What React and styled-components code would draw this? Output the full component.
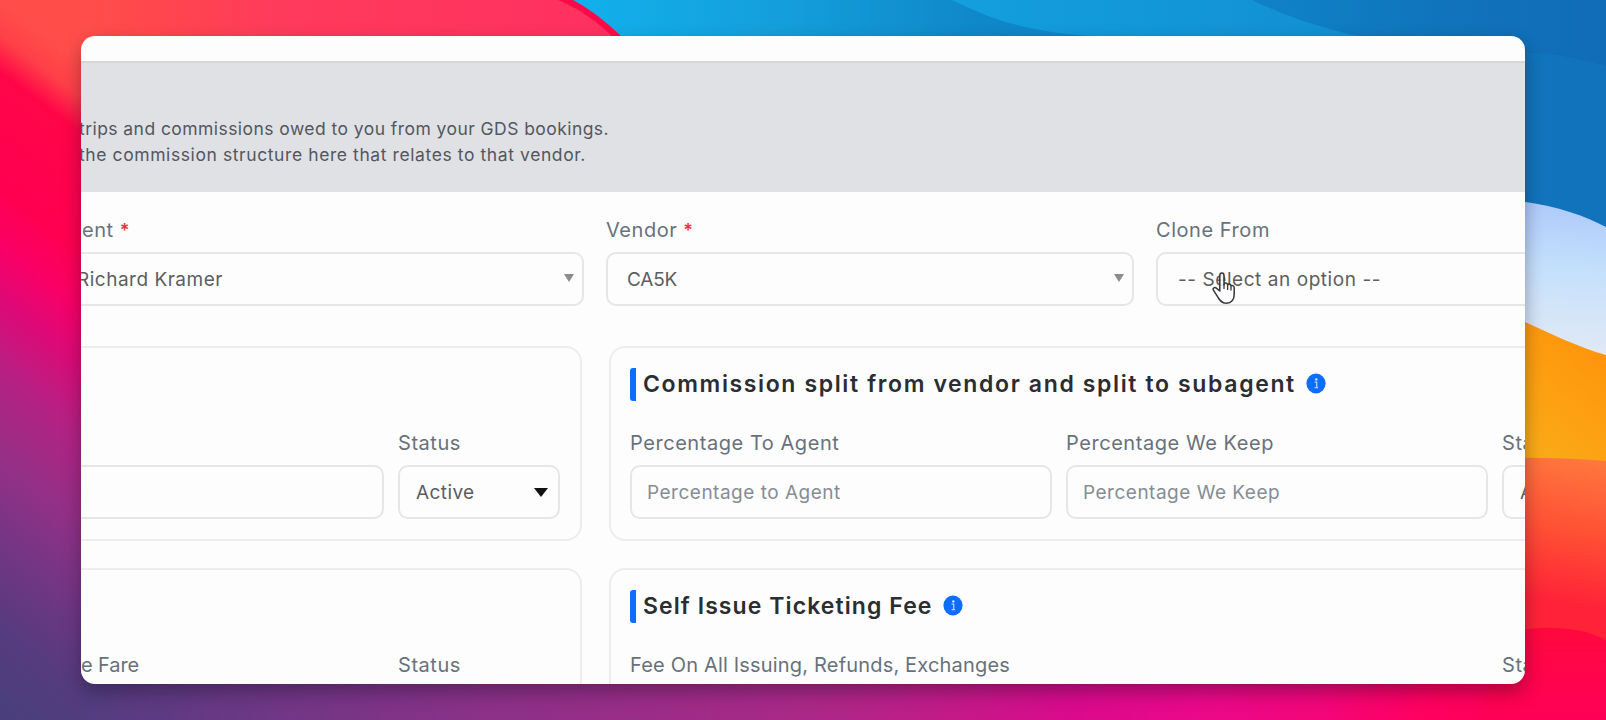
import styled, { createGlobalStyle } from 'styled-components';

const GlobalStyle = createGlobalStyle`
  * {
    box-sizing: border-box;
  }

  body {
    margin: 0;
    font-family: 'Inter', 'Open Sans', sans-serif;
    overflow: hidden;
  }
`;

const Desktop = styled.div`
  position: relative;
  width: 1606px;
  height: 720px;
  padding: 36px 81px;
  overflow: hidden;
`;

const WallpaperSvg = styled.svg`
  position: absolute;
  inset: 0;
`;

const Window = styled.main`
  position: relative;
  width: 1444px;
  height: 648px;
  overflow: hidden;
  background-color: #fdfdfd;
  border-radius: 14px;
`;

const WindowShadow = styled.div`
  position: relative;
  border-radius: 14px;
  box-shadow: 0 8px 18px rgba(20, 10, 30, 0.36);
`;

const Intro = styled.header`
  height: 131px;
  margin-top: 25px;
  padding-top: 53px;
  background-color: #e0e1e5;
  border-top: 2px solid #d6d8d8;
  color: #53575d;
  font-size: 17.5px;
`;

const IntroLine = styled.p`
  margin: 0 0 0 -2px;
  line-height: 26px;
  white-space: nowrap;
  letter-spacing: ${({ $tracking }) => $tracking}px;
`;

const FilterRow = styled.div`
  display: grid;
  grid-template-columns: 503px 528px 528px;
  column-gap: 22px;
  margin-top: 24px;
`;

const Field = styled.div`
  min-width: 0;
`;

const Label = styled.label`
  display: block;
  height: 28px;
  margin-bottom: 8px;
  padding-left: ${({ $indent }) => $indent || 0}px;
  color: #68717b;
  font-size: 20px;
  line-height: 28px;
  white-space: nowrap;
  letter-spacing: ${({ $tracking = 0.55 }) => $tracking}px;
`;

const Required = styled.span`
  margin-left: 6px;
  color: #e8323c;
  font-size: 18px;
  font-weight: 600;
  line-height: 1;
`;

const Control = styled.div`
  display: flex;
  align-items: center;
  justify-content: space-between;
  height: 54px;
  padding: 1px ${({ $right = 9 }) => $right}px 0 ${({ $left = 15 }) => $left}px;
  border: 2px solid #e6e6e8;
  border-radius: 10px;
  color: ${({ $placeholder }) => ($placeholder ? '#868d94' : '#5c5d60')};
  font-size: 19px;
  line-height: 28px;
  white-space: nowrap;
  letter-spacing: ${({ $tracking = 0.5 }) => $tracking}px;
  ${({ $cut }) => $cut && 'border-left: 0; border-radius: 0 10px 10px 0;'}
`;

const ClippedValue = styled.span`
  margin-left: -4px;
`;

const Caret = styled.span`
  margin-bottom: ${({ $dark }) => ($dark ? 1 : 4)}px;
  border: solid transparent;
  border-top-color: ${({ $dark }) => ($dark ? '#111' : '#8b8b8b')};
  border-width: ${({ $dark }) => ($dark ? '9px 7px 0' : '8px 5px 0')};
`;

const Sections = styled.div`
  display: grid;
  grid-template-columns: 501px 1100px;
  grid-auto-rows: 195px;
  gap: 27px;
  margin-top: 40px;
`;

const Section = styled.section`
  padding: 20px 20px 0 ${({ $cut }) => ($cut ? 0 : 19)}px;
  border: 2px solid #ededee;
  border-radius: 16px;
  ${({ $cut }) => $cut && 'border-left: 0; border-radius: 0 16px 16px 0;'}
`;

const SectionHead = styled.div`
  display: flex;
  align-items: center;
  height: 33px;
  margin-bottom: 28px;
`;

const Title = styled.h2`
  margin: 0;
  padding-left: 7px;
  border-left: 6px solid #0d6efd;
  border-radius: 3px;
  color: #2b2d31;
  font-size: 23px;
  font-weight: 600;
  line-height: 33px;
  white-space: nowrap;
  letter-spacing: ${({ $tracking }) => $tracking}px;
`;

const InfoSvg = styled.svg`
  margin: 0 0 2px 10px;
`;

const FieldRow = styled.div`
  display: grid;
  grid-template-columns: ${({ $columns }) => $columns};
  column-gap: 14px;
`;

const CursorSvg = styled.svg`
  position: absolute;
  left: 1129px;
  top: 234px;
`;

const Wallpaper = () => (
  <WallpaperSvg width="1606" height="720" viewBox="0 0 1606 720">
    <defs>
      <linearGradient id="left" gradientUnits="userSpaceOnUse" x1="0" y1="0" x2="-346" y2="461">
        <stop offset="0" stopColor="#ff4e4a" />
        <stop offset="0.05" stopColor="#ff3f48" />
        <stop offset="0.1" stopColor="#ff0548" />
        <stop offset="0.26" stopColor="#ff0050" />
        <stop offset="0.34" stopColor="#fa0066" />
        <stop offset="0.42" stopColor="#dc0a78" />
        <stop offset="0.52" stopColor="#b42283" />
        <stop offset="0.64" stopColor="#933087" />
        <stop offset="0.76" stopColor="#713684" />
        <stop offset="0.87" stopColor="#563b7f" />
        <stop offset="1" stopColor="#48407c" />
      </linearGradient>
      <linearGradient id="top" gradientUnits="userSpaceOnUse" x1="81" y1="0" x2="620" y2="0">
        <stop offset="0" stopColor="#ff4e4a" />
        <stop offset="0.15" stopColor="#ff464e" />
        <stop offset="0.38" stopColor="#ff3a5c" />
        <stop offset="1" stopColor="#ff3060" />
      </linearGradient>
      <linearGradient id="bottom" gradientUnits="userSpaceOnUse" x1="81" y1="0" x2="1606" y2="0">
        <stop offset="0" stopColor="#523d7f" />
        <stop offset="0.12" stopColor="#6e3785" />
        <stop offset="0.26" stopColor="#8a3188" />
        <stop offset="0.48" stopColor="#ab2888" />
        <stop offset="0.56" stopColor="#c01c88" />
        <stop offset="0.65" stopColor="#da0a8c" />
        <stop offset="0.73" stopColor="#ea088a" />
        <stop offset="0.81" stopColor="#f2067a" />
        <stop offset="0.88" stopColor="#ff0060" />
        <stop offset="1" stopColor="#ff0048" />
      </linearGradient>
      <linearGradient id="sky" gradientUnits="userSpaceOnUse" x1="570" y1="0" x2="1606" y2="0">
        <stop offset="0" stopColor="#12b1ed" />
        <stop offset="0.2" stopColor="#149fdc" />
        <stop offset="0.4" stopColor="#0f87c9" />
        <stop offset="0.7" stopColor="#0f80c6" />
        <stop offset="0.85" stopColor="#1073bb" />
        <stop offset="1" stopColor="#106cb6" />
      </linearGradient>
      <linearGradient id="arc" gradientUnits="userSpaceOnUse" x1="950" y1="0" x2="1360" y2="0">
        <stop offset="0" stopColor="#139fde" />
        <stop offset="1" stopColor="#128fd2" />
      </linearGradient>
      <linearGradient id="wave" gradientUnits="userSpaceOnUse" x1="1560" y1="205" x2="1550" y2="350">
        <stop offset="0" stopColor="#aecbfb" />
        <stop offset="0.45" stopColor="#c5e0fb" />
        <stop offset="1" stopColor="#e0e9f6" />
      </linearGradient>
      <linearGradient id="amber" gradientUnits="userSpaceOnUse" x1="1606" y1="350" x2="1530" y2="440">
        <stop offset="0" stopColor="#ff940c" />
        <stop offset="1" stopColor="#fba916" />
      </linearGradient>
      <linearGradient id="ember" gradientUnits="userSpaceOnUse" x1="1570" y1="458" x2="1545" y2="600">
        <stop offset="0" stopColor="#ff763e" />
        <stop offset="0.5" stopColor="#ff5034" />
        <stop offset="1" stopColor="#ff2238" />
      </linearGradient>
      <linearGradient id="crimson" gradientUnits="userSpaceOnUse" x1="0" y1="626" x2="0" y2="720">
        <stop offset="0" stopColor="#ff083c" />
        <stop offset="1" stopColor="#ff0058" />
      </linearGradient>
    </defs>
    <rect width="200" height="720" fill="url(#left)" />
    <path d="M81 0H660V60H81Z" fill="url(#top)" />
    <path d="M558 0H660V40H616C598 22 580 9 558 0Z" fill="#ff0a48" />
    <path d="M573 0H1606V240H1500V60H644C620 34 602 16 573 0Z" fill="url(#sky)" />
    <path d="M952 0H1252C1285 16 1320 28 1362 37H1110C1040 34 1000 24 952 0Z" fill="url(#arc)" />
    <path d="M1500 54C1540 50 1570 56 1606 66V240H1500Z" fill="#1179c0" opacity="0.5" />
    <path d="M1510 200C1550 204 1582 214 1606 227V370H1510Z" fill="url(#wave)" />
    <path d="M1510 315C1545 331 1575 346 1606 355V480H1510Z" fill="url(#amber)" />
    <rect x="81" y="670" width="1525" height="50" fill="url(#bottom)" />
    <path d="M1500 458Q1555 457 1606 461V660H1500Z" fill="url(#ember)" />
    <path d="M1500 634C1540 624 1580 626 1606 640V720H1480Z" fill="url(#crimson)" />
  </WallpaperSvg>
);

const InfoIcon = () => (
  <InfoSvg width="20" height="21" viewBox="0 0 20 21">
    <ellipse cx="10" cy="10.5" rx="9.6" ry="10" fill="#0d6efd" />
    <circle cx="10.3" cy="6.4" r="1.2" fill="#d6e6ff" />
    <path d="M8.6 9.2h2.1v5M8.6 14.6h3.4" fill="none" stroke="#b4d1ff" strokeWidth="1.3" />
  </InfoSvg>
);

const HandCursor = () => (
  <CursorSvg width="28" height="36" viewBox="0 0 28 36">
    <path
      d="M9.8 21V5.5C9.8 2 14 2 14 5.5V14.5C14.4 12.4 17.4 12.6 17.6 15C18.2 13.2 21 13.8 21 16.2C21.8 14.8 24.2 15.4 24.2 17.8V24C24.2 30 21 33.2 16.2 33.2C11 33.2 9.4 29.6 7.4 26.4L3.4 20.2C2.2 18 4.8 16.6 6.6 18.4Z"
      fill="#fff"
      fillOpacity="0.85"
      stroke="#34363a"
      strokeWidth="1.5"
      strokeLinejoin="round"
    />
    <path d="M14 14V19M17.6 15V20M21 16.5V20.5" stroke="#34363a" strokeWidth="1.3" />
  </CursorSvg>
);

const StatusField = () => (
  <Field>
    <Label>Status</Label>
    <Control $left={16} $right={10} $tracking={0.4}>
      Active
      <Caret $dark />
    </Control>
  </Field>
);

export default function App() {
  return (
    <>
      <GlobalStyle />
      <Desktop>
        <Wallpaper />
        <WindowShadow>
          <Window>
            <Intro>
              <IntroLine $tracking={0.44}>
                trips and commissions owed to you from your GDS bookings.
              </IntroLine>
              <IntroLine $tracking={0.59}>
                the commission structure here that relates to that vendor.
              </IntroLine>
            </Intro>

            <FilterRow>
              <Field>
                <Label $indent={1}>
                  ent<Required>*</Required>
                </Label>
                <Control $cut $left={0} $right={8}>
                  <ClippedValue>Richard Kramer</ClippedValue>
                  <Caret />
                </Control>
              </Field>
              <Field>
                <Label>
                  Vendor<Required>*</Required>
                </Label>
                <Control $left={19} $right={8} $tracking={-0.2}>
                  CA5K
                  <Caret />
                </Control>
              </Field>
              <Field>
                <Label>Clone From</Label>
                <Control $left={20} $tracking={0.56}>
                  -- Select an option --
                </Control>
              </Field>
            </FilterRow>

            <Sections>
              <Section $cut>
                <SectionHead />
                <FieldRow $columns="303px 162px">
                  <Field>
                    <Label />
                    <Control $cut />
                  </Field>
                  <StatusField />
                </FieldRow>
              </Section>

              <Section>
                <SectionHead>
                  <Title $tracking={1.63}>Commission split from vendor and split to subagent</Title>
                  <InfoIcon />
                </SectionHead>
                <FieldRow $columns="422px 422px 162px">
                  <Field>
                    <Label>Percentage To Agent</Label>
                    <Control $placeholder>Percentage to Agent</Control>
                  </Field>
                  <Field>
                    <Label>Percentage We Keep</Label>
                    <Control $placeholder>Percentage We Keep</Control>
                  </Field>
                  <StatusField />
                </FieldRow>
              </Section>

              <Section $cut>
                <SectionHead />
                <FieldRow $columns="303px 162px">
                  <Label $tracking={-0.1}>e Fare</Label>
                  <Label>Status</Label>
                </FieldRow>
              </Section>

              <Section>
                <SectionHead>
                  <Title $tracking={1.08}>Self Issue Ticketing Fee</Title>
                  <InfoIcon />
                </SectionHead>
                <FieldRow $columns="858px 162px">
                  <Label $tracking={0.18}>Fee On All Issuing, Refunds, Exchanges</Label>
                  <Label>Status</Label>
                </FieldRow>
              </Section>
            </Sections>

            <HandCursor />
          </Window>
        </WindowShadow>
      </Desktop>
    </>
  );
}
